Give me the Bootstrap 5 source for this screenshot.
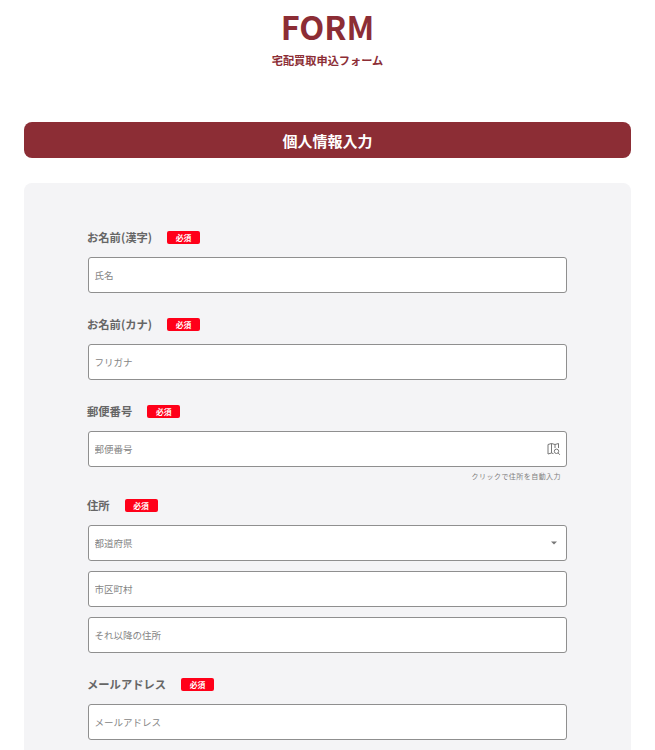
<!DOCTYPE html>
<html lang="ja">
<head>
<meta charset="utf-8">
<title>FORM</title>
<link href="https://cdn.jsdelivr.net/npm/bootstrap@5.3.0/dist/css/bootstrap.min.css" rel="stylesheet">
<style>
html,body{height:750px;overflow:hidden}
body{font-family:"Noto Sans CJK JP","Noto Sans",sans-serif;background:#fff;color:#666}
.page-wrap{padding:0 24px}
.form-title{color:#8c2d35;font-size:32.500px;font-weight:700;line-height:50px;margin:1px 0 0;text-align:center}
.form-sub{color:#8c2d35;font-size:11.200px;font-weight:700;line-height:16px;margin:0;text-align:center;padding-top:1px}
.sec-bar{background:#8c2d35;color:#fff;border-radius:8px;height:36px;line-height:37px;font-size:15px;font-weight:700;text-align:center;margin:54px 0 25px}
.panel{background:#f4f4f6;border-radius:8px 8px 0 0;padding:47px 64px 0 63px;height:600px}
.fld-label{display:flex;align-items:center;gap:15px;font-size:11.300px;font-weight:700;height:15px;margin-bottom:12px;color:#666}
.req{background:#ff0019;color:#fff;font-size:7.800px;font-weight:700;border-radius:2px;width:33px;height:13px;line-height:13px;text-align:center}
.field{margin-left:1px;width:calc(100% - 1px);height:35.500px;min-height:0;border:1px solid #8f8f8f;border-radius:3px;background-color:#fff;font-size:9.500px;padding:0 5.500px;color:#666;box-shadow:none}
.field::placeholder{color:#858585}
select.field{color:#858585;background-size:10px 8px;background-position:right 7px center;background-image:url("data:image/svg+xml,%3csvg xmlns='http://www.w3.org/2000/svg' viewBox='0 0 10 8'%3e%3cpath fill='%23777' d='M2 2.500h6L5 5.500z'/%3e%3c/svg%3e")}
.fld-group{margin-bottom:24.500px}
.fld-last{margin-top:24.500px}
.zip-wrap{position:relative}
.zip-icon{position:absolute;right:6px;top:11px;width:14px;height:14px}
.hint{font-size:7px;line-height:10px;text-align:right;color:#808080;padding:4px 6px 0 0;letter-spacing:.45px}
.addr{margin-top:17.500px}
.stack{display:flex;flex-direction:column;gap:10.500px}
</style>
</head>
<body>
<div class="page-wrap">
  <h1 class="form-title">FORM</h1>
  <p class="form-sub">宅配買取申込フォーム</p>
  <h2 class="sec-bar">個人情報入力</h2>
  <form class="panel">
    <div class="fld-group">
      <div class="fld-label"><span>お名前(漢字)</span><span class="req">必須</span></div>
      <input class="form-control field" placeholder="氏名">
    </div>
    <div class="fld-group">
      <div class="fld-label"><span>お名前(カナ)</span><span class="req">必須</span></div>
      <input class="form-control field" placeholder="フリガナ">
    </div>
    <div>
      <div class="fld-label"><span>郵便番号</span><span class="req">必須</span></div>
      <div class="zip-wrap">
        <input class="form-control field" placeholder="郵便番号">
        <svg class="zip-icon" viewBox="0 0 14 14" fill="none" stroke="#777" stroke-width="1"><path d="M1 2.500 4.500 1.500 8 2.500 11.500 1.500V6M1 2.500V12l3.500-1 2 .6M4.500 1.500V11M8 2.500V6"/><circle cx="9.500" cy="9.300" r="2.200"/><path d="M11.100 10.900 12.800 12.800"/></svg>
      </div>
      <div class="hint">クリックで住所を自動入力</div>
    </div>
    <div class="addr">
      <div class="fld-label"><span>住所</span><span class="req">必須</span></div>
      <div class="stack">
        <select class="form-select field"><option>都道府県</option></select>
        <input class="form-control field" placeholder="市区町村">
        <input class="form-control field" placeholder="それ以降の住所">
      </div>
    </div>
    <div class="fld-last">
      <div class="fld-label"><span>メールアドレス</span><span class="req">必須</span></div>
      <input class="form-control field" placeholder="メールアドレス">
    </div>
  </form>
</div>
<script src="https://cdn.jsdelivr.net/npm/bootstrap@5.3.0/dist/js/bootstrap.bundle.min.js"></script>
</body>
</html>
